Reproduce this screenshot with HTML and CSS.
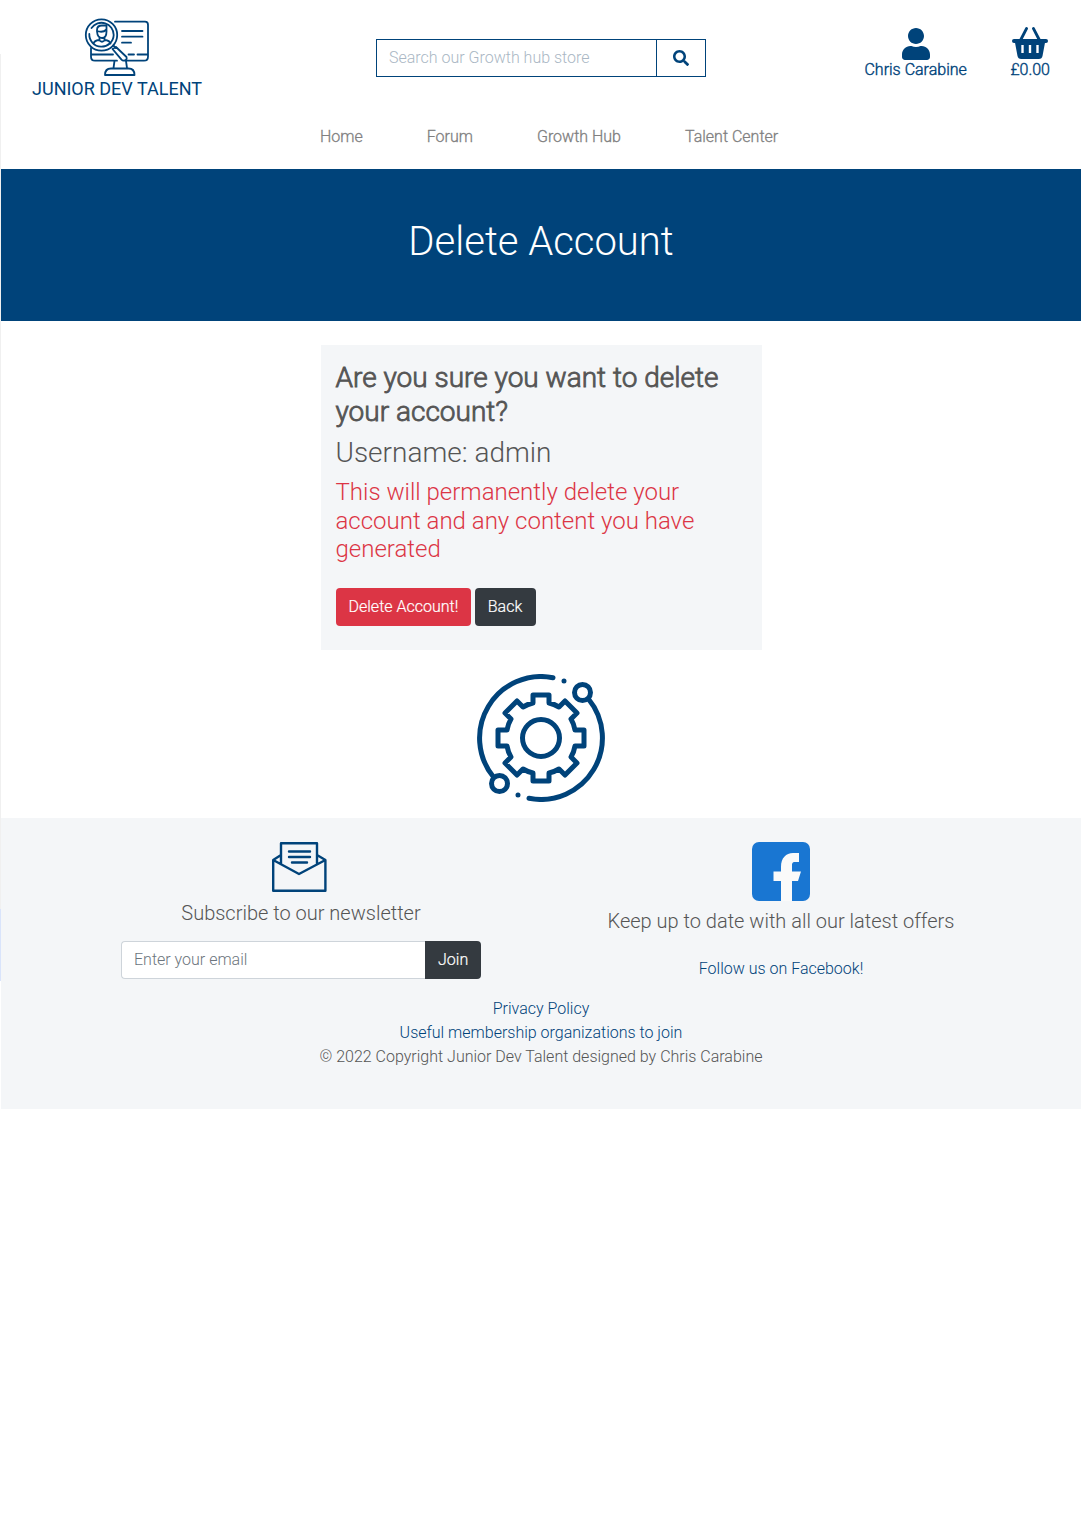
FILE: index.html
```html
<!DOCTYPE html>
<html lang="en">
<head>
<meta charset="utf-8">
<title>Delete Account</title>
<link rel="stylesheet" href="styles.css">
</head>
<body>
<div class="edge"><i class="edge-grey"></i><i class="edge-blue"></i></div>
<div class="page">
<header class="header">
  <div class="topbar">
    <a class="brand" href="#">
      <svg class="brand-icon" width="66" height="60" viewBox="0 0 66 60" fill="none" stroke="currentColor" stroke-width="1.8" stroke-linecap="round" stroke-linejoin="round">
        <circle cx="17.500" cy="18" r="15.700"/><path d="M7.500 11A12.200 12.200 0 0 1 29.700 18A12.200 12.200 0 1 1 5.300 17"/>
        <path d="M31 4.700h30q3 0 3 3v32q0 4-4 4H43M33 43.700H11q-4 0-4-4V31M7 37.500h22M44.500 37.500h5.500M53.500 37.500H64M38 14h20.500M38 19.700h20.500M38 25.700h9M30.500 44l-1 7M42 44l1 7M21 58q0-6.500 6-6.500h17.500q6 0 6 6.500zM29.300 28.500l2.500 2.500M28.500 32l3.500-2 10.500 10q1 3.500-3 3.700-1 0-2-1z"/>
        <path d="M13 13q0-4.500 5-4.500h4.500v6q0 6.500-4.500 6.500t-5-6.500zM13 14q6 2 9.500-1.500M15.500 20.500v2.500M20.500 20.500v2.500M9.500 26.500q1-3 5.500-3.500 3 3.500 6 0 4.500.5 5.500 3.500"/>
      </svg>
      <span class="brand-name">JUNIOR DEV TALENT</span>
    </a>
    <form class="search">
      <input class="search-input" type="text" placeholder="Search our Growth hub store">
      <button class="search-button" type="button" aria-label="Search"><svg width="16" height="16" viewBox="0 0 512 512" fill="currentColor"><path d="M505 442.700L405.300 343c-4.500-4.500-10.600-7-17-7H372c27.600-35.300 44-79.700 44-128C416 93.100 322.900 0 208 0S0 93.100 0 208s93.100 208 208 208c48.300 0 92.700-16.400 128-44v16.300c0 6.400 2.500 12.500 7 17l99.700 99.700c9.400 9.400 24.600 9.400 33.900 0l28.300-28.300c9.400-9.400 9.400-24.600.1-34zM208 336c-70.700 0-128-57.200-128-128 0-70.700 57.200-128 128-128 70.700 0 128 57.200 128 128 0 70.700-57.200 128-128 128z"/></svg></button>
    </form>
    <div class="tools">
      <a class="tool tool-user" href="#">
        <svg width="28" height="32" viewBox="0 0 448 512" fill="currentColor"><path d="M224 256c70.700 0 128-57.300 128-128S294.700 0 224 0 96 57.300 96 128s57.300 128 128 128zm89.600 32h-16.700c-22.200 10.200-46.900 16-72.900 16s-50.600-5.800-72.900-16h-16.700C60.200 288 0 348.200 0 422.400V464c0 26.500 21.500 48 48 48h352c26.500 0 48-21.500 48-48v-41.600c0-74.200-60.200-134.400-134.400-134.400z"/></svg>
        <span>Chris Carabine</span>
      </a>
      <a class="tool tool-cart" href="#">
        <svg width="36" height="32" viewBox="0 0 576 512" fill="none" stroke="currentColor" stroke-linecap="round" stroke-linejoin="round"><path d="M32 224h512" stroke-width="64"/><path d="M138 208L232 26M438 208L344 26" stroke-width="46"/><path d="M44 230h488l-44 235q-9 47-58 47H146q-49 0-58-47z" fill="currentColor" stroke="none"/><path d="M168 288v128M288 288v128M408 288v128" stroke="#fff" stroke-width="38" stroke-linecap="butt"/></svg>
        <span>£0.00</span>
      </a>
    </div>
  </div>
  <nav class="nav"><a href="#">Home</a><a href="#">Forum</a><a href="#">Growth Hub</a><a href="#">Talent Center</a></nav>
</header>
<section class="banner"><h1>Delete Account</h1></section>
<main class="main">
  <section class="card">
    <h2 class="question">Are you sure you want to delete<br>your account?</h2>
    <h2 class="username">Username: admin</h2>
    <h3 class="warning">This will permanently delete your<br>account and any content you have<br>generated</h3>
    <div class="actions"><button class="btn btn-danger" type="button">Delete Account!</button><button class="btn btn-dark" type="button">Back</button></div>
  </section>
  <svg class="gear" width="128" height="128" viewBox="0 0 128 128" fill="none" stroke="currentColor" stroke-width="5" stroke-linecap="round" stroke-linejoin="round">
    <circle cx="64" cy="64" r="18.500"/>
    <path d="M56 21h16v8q5 1 10 4l6-6 12 12-6 6q3 5 4 11h9v16h-9q-1 6-4 11l6 6-12 12-6-6q-5 3-10 4v8H56v-8q-5-1-10-4l-6 6-12-12 6-6q-3-5-4-11h-9V56h9q1-6 4-11l-6-6 12-12 6 6q5-3 10-4z"/>
    <path d="M76 3.700A61.500 61.500 0 0 0 16.500 103M111.500 25A61.500 61.500 0 0 1 52 124.300"/>
    <circle cx="105.500" cy="18.500" r="8"/><circle cx="22.500" cy="109.500" r="8"/>
    <path d="M87 7h0M41 121h0"/>
  </svg>
</main>
<footer class="footer">
  <div class="footer-cols">
    <section class="footer-col">
      <svg class="mail" width="56" height="50" viewBox="0 0 56 50" fill="none" stroke="currentColor" stroke-width="2.400" stroke-linejoin="round"><path d="M10 13L2.200 18v30.800h52.200V18L46 13M2.200 18L28 32l26.400-14M10 22V1.200h36V22"/><path d="M18 9.500h21M18 15h21M21 20.500h15" stroke-linecap="round"/></svg>
      <h5>Subscribe to our newsletter</h5>
      <form class="subscribe"><input type="email" placeholder="Enter your email"><button class="btn btn-dark" type="button">Join</button></form>
    </section>
    <section class="footer-col footer-social">
      <svg class="facebook" width="58" height="59" viewBox="0 0 58 59"><rect width="58" height="59" rx="7" fill="#1976d2"/><path d="M29 59V39h-7.500v-9.500H29V25c0-9 5-14 12-14h6v9h-4c-3 0-3 2-3 4v5.500h9L46 39h-6v20z" fill="#fafafa"/></svg>
      <h5>Keep up to date with all our latest offers</h5>
      <a class="follow" href="#">Follow us on Facebook!</a>
    </section>
  </div>
  <div class="legal"><a class="privacy" href="#">Privacy Policy</a><a class="useful" href="#">Useful membership organizations to join</a><p>© 2022 Copyright Junior Dev Talent designed by Chris Carabine</p></div>
</footer>
</div>
</body>
</html>
```
FILE: styles.css
```css
* { box-sizing: border-box; }
body { margin: 0; background: #fff; color: #555; font: 300 16px/24px Roboto, sans-serif; display: flex; }
a { color: #00437a; text-decoration: none; }
h1, h2, h3, h5, p { margin: 0; font-weight: 300; }
svg { display: block; flex: none; }
input, button { font: inherit; border-radius: 0; margin: 0; }
.edge { width: 1px; flex: none; padding-top: 54px; }
.edge i { display: block; }
.edge-grey { height: 855px; background: #f0f0f0; }
.edge-blue { height: 72px; background: #d9e4fb; }
.page { width: 1080px; }
.header { height: 169px; color: #00437a; }
.topbar { display: grid; grid-template-columns: 232px 1fr 232px; height: 125px; }
.brand { display: flex; flex-direction: column; align-items: center; padding-top: 17px; }
.brand-name { font-size: 18px; font-weight: 400; line-height: 24px; white-space: nowrap; }
.search { display: flex; width: 330px; height: 38px; margin: 39px auto 0; border: 1px solid #00437a; }
.search-input { width: 279px; padding: 0 12px; border: 0; background: #fff; }
.search-input::placeholder { color: #aab7c4; opacity: 1; }
.search-button { display: grid; place-items: center; padding: 0; border: 0; border-left: 1px solid #00437a; background: #fff; color: #00437a; flex: 1; }
.tools { display: flex; justify-content: flex-end; gap: 43.6px; padding: 27px 31px 0 0; }
.tool { display: flex; flex-direction: column; align-items: center; line-height: 22px; -webkit-text-stroke: .4px currentColor; white-space: nowrap; }
.tool-user { padding-top: 1px; line-height: 20px; }
.nav { display: flex; gap: 64px; padding-left: 319px; }
.nav a { color: #808080; -webkit-text-stroke: .3px currentColor; }
.banner { display: grid; place-items: center; height: 152px; padding-bottom: 6px; background: #00437a; color: #fff; }
.banner h1 { font-size: 40px; line-height: 48px; }
.main { display: flex; flex-direction: column; align-items: center; gap: 24px; padding: 24px 0 16px; }
.card { width: 441px; height: 305px; padding: 16px 15px; background: #f4f6f8; white-space: nowrap; }
.card h2 { font-size: 28px; line-height: 33.6px; margin-bottom: 8px; }
.card .question { -webkit-text-stroke: .85px currentColor; }
.warning { font-size: 24px; line-height: 28.8px; color: #dc3545; }
.actions { display: flex; gap: 4px; margin-top: 24px; }
.btn { height: 38px; padding: 0 12px; border: 1px solid transparent; border-radius: 4px; color: #fff; -webkit-text-stroke: .2px currentColor; white-space: nowrap; }
.btn-danger { width: 135px; background: #dc3545; }
.btn-dark { background: #343a40; }
.actions .btn-dark { width: 61px; }
.gear { color: #00437a; }
.footer { height: 291px; padding-top: 24px; background: #f4f6f8; }
.footer-cols { display: grid; grid-template-columns: 1fr 1fr; width: 960px; height: 155px; margin: 0 auto; }
.footer-col { display: flex; flex-direction: column; align-items: center; }
.footer h5 { font-size: 20px; line-height: 24px; margin-top: 9px; white-space: nowrap; }
.footer-social h5 { margin-top: 8px; }
.mail { color: #00437a; margin-right: 4px; }
.subscribe { display: flex; width: 360px; height: 38px; margin-top: 16px; }
.subscribe input { flex: 1; min-width: 0; padding: 0 12px; border: 1px solid #ced4da; border-right: 0; border-radius: 4px 0 0 4px; background: #fff; }
.subscribe input::placeholder { color: #6c757d; opacity: 1; }
.subscribe .btn { width: 56px; border-radius: 0 4px 4px 0; }
.follow { margin-top: 24px; }
.legal { display: flex; flex-direction: column; align-items: center; }
```
